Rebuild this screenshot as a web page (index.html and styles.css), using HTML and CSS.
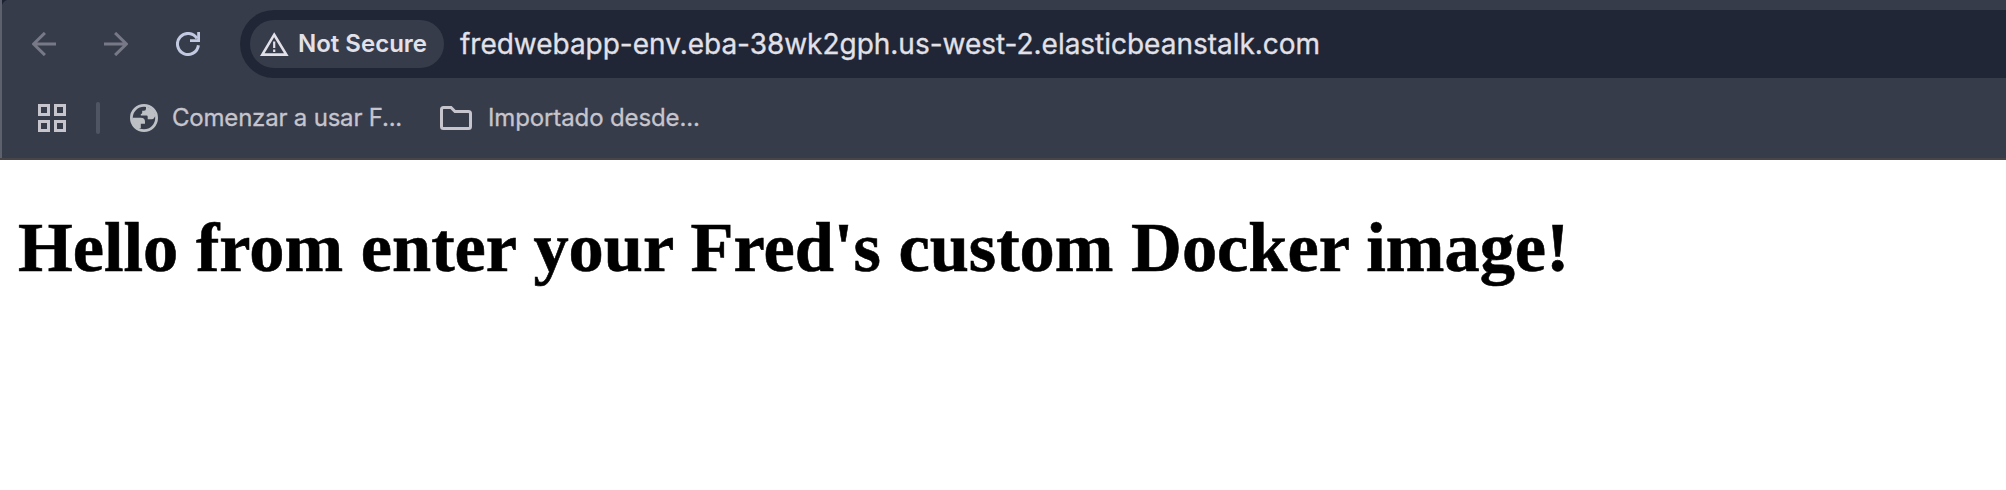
FILE: index.html
```html
<!DOCTYPE html>
<html lang="en">
<head>
<meta charset="utf-8">
<title>Docker app</title>
<link rel="stylesheet" href="styles.css">
</head>
<body>
<header class="chrome">
  <div class="toolbar">
    <svg class="nav dim" viewBox="0 0 24 24"><path d="M24 12H2M12.9 .9L1.6 12l11.300 11.100"/></svg>
    <svg class="nav dim" viewBox="0 0 24 24"><path d="M0 12h22M11.100 .9L22.400 12 11.100 23.100"/></svg>
    <svg class="nav reload" viewBox="0 0 24 24"><path d="M22.4 13.2A10.5 10.5 0 1 1 21 6.6"/><path class="tip" d="M21.2 0H24v10H14V7.2h7.2z"/></svg>
    <div class="omnibox">
      <div class="chip">
        <svg class="warn" viewBox="0 0 29 24"><path d="M14.200 2.700L26.300 22.600H2.300z"/><path class="mark" d="M14.200 9.5v6.5M14.200 17.6v2.4"/></svg>
        <span class="chip-label">Not Secure</span>
      </div>
      <span class="url">fredwebapp-env.eba-38wk2gph.us-west-2.elasticbeanstalk.com</span>
    </div>
  </div>
  <nav class="bookmarks">
    <svg class="apps" viewBox="0 0 28 28"><path d="M1.5 1.5h9v9h-9zM17.5 1.5h9v9h-9zM1.5 17.5h9v9h-9zM17.5 17.5h9v9h-9z"/></svg>
    <span class="divider"></span>
    <svg class="globe" viewBox="0 0 28 28"><circle cx="14" cy="14" r="12.6"/><path d="M16 2.5v2.2q0 2-2 2h-1.8v2q0 1.3-1.4 1.3v1.5h5.7q1.2 0 1.2 1.2v2.6h4q1.6 0 2.4-1.4l1.4-2.4Q24 4 16 2.5zM2.5 13.7h8.3q4.2 0 4.2 4v2h-4.2v4.2L8 25Q2 20.500 2.500 13.700z"/></svg>
    <span class="bookmark first">Comenzar a usar F...</span>
    <svg class="folder" viewBox="0 0 32 24"><path d="M3.500 1.500h7.500l4 4h13.500q2 0 2 2v13q0 2-2 2h-25q-2 0-2-2v-17q0-2 2-2z"/></svg>
    <span class="bookmark second">Importado desde...</span>
  </nav>
</header>
<main class="page">
  <h1 class="title">Hello from enter your Fred's custom Docker image!</h1>
</main>
</body>
</html>
```

FILE: styles.css
```css
body {
  margin: 0;
  background: #fff;
  overflow: hidden;
}

.chrome {
  box-sizing: border-box;
  height: 160px;
  padding-top: 10px;
  border-bottom: 2px solid #484549;
  background:
    linear-gradient(#5c616d, #5c616d) 0 0 / 2px 100% no-repeat,
    radial-gradient(circle at 100% 100%, #373c4b 8px, #1c2231 9px) 2px 0 / 8px 8px no-repeat,
    #373c4b;
  font-family: Inter, "Liberation Sans", sans-serif;
}

.toolbar {
  display: flex;
  align-items: center;
  height: 68px;
  padding-left: 32px;
}

.nav {
  flex: none;
  width: 24px;
  height: 24px;
  margin-right: 48px;
  fill: none;
  stroke-width: 3;
}

.dim { stroke: #777987; }

.reload {
  margin-right: 40px;
  stroke: #c2cae2;
}

.tip {
  fill: #c2cae2;
  stroke: none;
}

.omnibox {
  display: flex;
  flex: 1;
  align-items: center;
  height: 68px;
  box-sizing: border-box;
  padding-left: 10px;
  border-radius: 34px 0 0 34px;
  background: #202635;
}

.chip {
  display: flex;
  align-items: center;
  box-sizing: border-box;
  width: 194px;
  height: 48px;
  padding-left: 10px;
  border-radius: 24px;
  background: #373c4b;
}

.warn {
  flex: none;
  width: 29px;
  height: 24px;
  margin: -1px 9px 0 0;
  fill: none;
  stroke: #e2e1e9;
  stroke-width: 2.6;
}

.mark { stroke-width: 2.2; }

.chip-label {
  color: #e2e1e9;
  font-size: 24px;
  font-weight: 600;
  line-height: 48px;
  white-space: nowrap;
}

.url {
  margin-left: 16px;
  padding-top: 1px;
  color: #e2e1e9;
  font-size: 28px;
  letter-spacing: -0.02px;
  line-height: 69px;
  white-space: nowrap;
  -webkit-text-stroke: 0.3px #e2e1e9;
}

.bookmarks {
  display: flex;
  align-items: center;
  height: 80px;
  padding-left: 38px;
}

.apps {
  flex: none;
  width: 28px;
  height: 28px;
  fill: none;
  stroke: #c6c5cd;
  stroke-width: 3;
}

.divider {
  width: 4px;
  height: 32px;
  margin: 0 30px;
  border-radius: 2px;
  background: #505564;
}

.globe {
  flex: none;
  width: 28px;
  height: 28px;
  fill: none;
  stroke: #bdc1c6;
  stroke-width: 2.8;
}

.globe path {
  fill: #bdc1c6;
  stroke: none;
}

.bookmark {
  color: #c6c5cd;
  font-size: 24px;
  line-height: 80px;
  white-space: nowrap;
  -webkit-text-stroke: 0.3px #c6c5cd;
}

.first {
  width: 268px;
  margin-left: 14px;
  letter-spacing: -0.2px;
}

.folder {
  flex: none;
  width: 32px;
  height: 24px;
  fill: none;
  stroke: #c6c5cd;
  stroke-width: 3;
}

.second {
  margin-left: 16px;
  letter-spacing: -0.12px;
}

.page { padding: 47px 16px 0 18px; }

.title {
  margin: 0;
  color: #000;
  font: bold 70.4px/80px "Liberation Serif", serif;
  white-space: nowrap;
  -webkit-text-stroke: 0.6px #000;
}
```
